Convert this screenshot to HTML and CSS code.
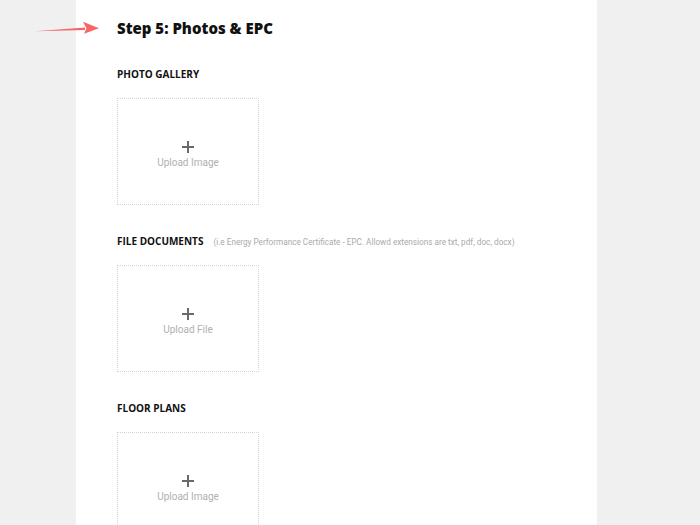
FILE: index.html
```html
<!DOCTYPE html>
<html>
<head>
<meta charset="utf-8">
<link rel="stylesheet" href="styles.css">
</head>
<body>
<div class="page">
  <svg class="arrow" width="66" height="16" viewBox="0 0 66 16">
    <path d="M0 11.2 L50 7.4 L50 10 Z" fill="#f76565"/>
    <path d="M48 1.8 L64 8.2 L49 13.8 L51.5 8.6 Z" fill="#f76565"/>
  </svg>
  <main class="panel">
    <h1 class="title">Step 5: Photos &amp; EPC</h1>
    <section class="section">
      <h2 class="label">PHOTO GALLERY</h2>
      <div class="drop">
        <svg class="plus" width="12" height="12" viewBox="0 0 12 12"><path d="M6 0V12M0 6H12" stroke="#6a6a6a" stroke-width="2"/></svg>
        <span class="drop-text">Upload Image</span>
      </div>
    </section>
    <section class="section">
      <h2 class="label">FILE DOCUMENTS <span class="note">(i.e Energy Performance Certificate - EPC. Allowd extensions are txt, pdf, doc, docx)</span></h2>
      <div class="drop">
        <svg class="plus" width="12" height="12" viewBox="0 0 12 12"><path d="M6 0V12M0 6H12" stroke="#6a6a6a" stroke-width="2"/></svg>
        <span class="drop-text">Upload File</span>
      </div>
    </section>
    <section class="section">
      <h2 class="label">FLOOR PLANS</h2>
      <div class="drop">
        <svg class="plus" width="12" height="12" viewBox="0 0 12 12"><path d="M6 0V12M0 6H12" stroke="#6a6a6a" stroke-width="2"/></svg>
        <span class="drop-text">Upload Image</span>
      </div>
    </section>
  </main>
</div>
</body>
</html>
```
FILE: styles.css
```css
html, body {
  margin: 0;
  padding: 0;
  background: #f0f0f0;
  height: 525px;
  overflow: hidden;
}
.page {
  position: relative;
  height: 525px;
}
.arrow {
  position: absolute;
  left: 35px;
  top: 20px;
}
.panel {
  margin-left: 76px;
  width: 480px;
  height: 525px;
  background: #fff;
  padding: 18px 0 0 41px;
  box-sizing: content-box;
  font-family: "Open Sans", "Liberation Sans", sans-serif;
}
.title {
  margin: 0;
  font-size: 15px;
  font-weight: 800;
  color: #111;
  line-height: 20px;
}
.title + .section {
  margin-top: 29px;
}
.section + .section {
  margin-top: 29px;
}
.label {
  margin: 0;
  font-size: 10px;
  font-weight: 700;
  color: #111;
  line-height: 14px;
  height: 14px;
  display: flex;
  align-items: baseline;
  gap: 10px;
}
.note {
  font-family: Roboto, "Liberation Sans", sans-serif;
  font-weight: 400;
  font-size: 8.2px;
  line-height: 1;
  color: #aaa;
}
.drop {
  margin-top: 17px;
  width: 140px;
  border: 1px dotted #d4d4d4;
  display: flex;
  flex-direction: column;
  align-items: center;
  justify-content: center;
  padding-top: 7px;
  box-sizing: content-box;
  height: 98px;
}
.plus {
  display: block;
}
.drop-text {
  font-family: Roboto, "Liberation Sans", sans-serif;
  font-size: 10px;
  color: #b0b0b0;
  line-height: 14px;
  margin-top: 3px;
}
```
